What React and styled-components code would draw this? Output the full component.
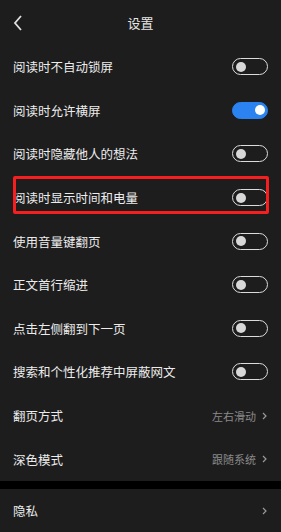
import React from "react";
import styled, { createGlobalStyle } from "styled-components";

const GlobalStyle = createGlobalStyle`
  html, body {
    margin: 0;
    padding: 0;
    background: #1d1d1d;
  }
  body {
    font-family: "Noto Sans CJK SC", "Noto Sans", sans-serif;
    -webkit-font-smoothing: antialiased;
  }
`;

const Page = styled.div`
  width: 281px;
  height: 532px;
  overflow: hidden;
  background: #1d1d1d;
  color: #ececec;
  position: relative;
`;

const Header = styled.div`
  height: 45px;
  display: flex;
  align-items: center;
  justify-content: center;
  position: relative;
  font-size: 13px;
  color: #e6e6e6;
`;

const BackButton = styled.div`
  position: absolute;
  left: 12px;
  top: 14px;
  width: 14px;
  height: 18px;
  display: flex;
`;

const Section = styled.div`
  display: flex;
  flex-direction: column;
`;

const Row = styled.div`
  height: ${({ $h }) => $h || 43.6}px;
  display: flex;
  align-items: center;
  justify-content: space-between;
  padding: 0 13px;
  font-size: 12.5px;
  color: #ececec;
`;

const Gap = styled.div`
  height: 8px;
  background: #000;
`;

const Switch = styled.div`
  width: 36px;
  height: 17px;
  box-sizing: border-box;
  border-radius: 9px;
  border: 1.5px solid ${({ $on }) => ($on ? "#2a83f0" : "#dcdcdc")};
  background: ${({ $on }) => ($on ? "#2a83f0" : "transparent")};
  display: flex;
  align-items: center;
  justify-content: ${({ $on }) => ($on ? "flex-end" : "flex-start")};
  padding: 0 2.5px;
`;

const Knob = styled.div`
  width: 10px;
  height: 10px;
  border-radius: 50%;
  background: ${({ $on }) => ($on ? "#ffffff" : "#d8d8d8")};
`;

const Value = styled.div`
  display: flex;
  align-items: center;
  gap: 6px;
  font-size: 11px;
  color: #8a8a8a;
  margin-right: 1px;
`;

const Highlight = styled.div`
  position: absolute;
  left: 13px;
  top: 176px;
  width: 256px;
  height: 38px;
  box-sizing: border-box;
  border: 3px solid #f61e1e;
  border-radius: 2px;
  pointer-events: none;
`;

const Chevron = () => (
  <svg width="5" height="8" viewBox="0 0 5 8">
    <polyline points="1,1 4,4 1,7" fill="none" stroke="#9a9a9a" strokeWidth="1.2" />
  </svg>
);

const toggles = [
  ["阅读时不自动锁屏", false],
  ["阅读时允许横屏", true],
  ["阅读时隐藏他人的想法", false],
  ["阅读时显示时间和电量", false],
  ["使用音量键翻页", false],
  ["正文首行缩进", false],
  ["点击左侧翻到下一页", false],
  ["搜索和个性化推荐中屏蔽网文", false],
];

const choices = [
  ["翻页方式", "左右滑动"],
  ["深色模式", "跟随系统"],
];

export default function App() {
  return (
    <Page>
      <GlobalStyle />
      <Header>
        <BackButton>
          <svg width="14" height="18" viewBox="0 0 14 18">
            <polyline points="9,2 3,9 9,16" fill="none" stroke="#e0e0e0" strokeWidth="1.8" />
          </svg>
        </BackButton>
        设置
      </Header>
      <Section>
        {toggles.map(([label, on]) => (
          <Row key={label}>
            <span>{label}</span>
            <Switch $on={on}>
              <Knob $on={on} />
            </Switch>
          </Row>
        ))}
        {choices.map(([label, value]) => (
          <Row key={label}>
            <span>{label}</span>
            <Value>
              {value}
              <Chevron />
            </Value>
          </Row>
        ))}
      </Section>
      <Gap />
      <Section>
        <Row $h={44}>
          <span>隐私</span>
          <Value>
            <Chevron />
          </Value>
        </Row>
      </Section>
      <Highlight />
    </Page>
  );
}
